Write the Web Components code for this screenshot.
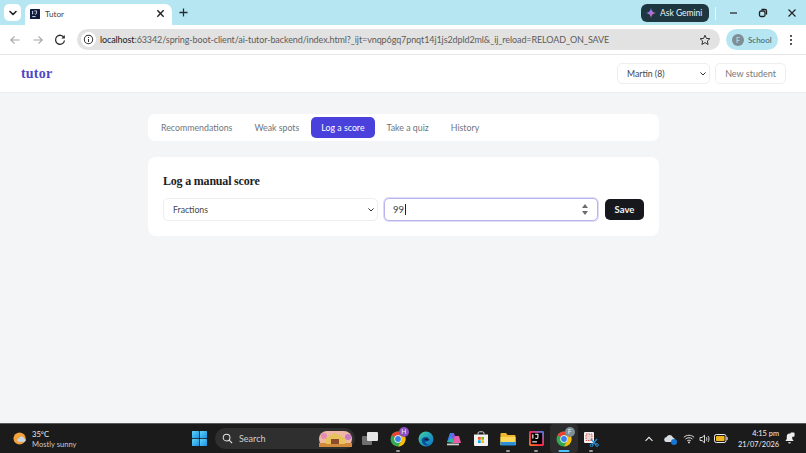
<!DOCTYPE html>
<html lang="en"><head><meta charset="utf-8"><title>Tutor</title>
<style>
html,body{margin:0;height:100%;overflow:hidden}
body{display:flex;flex-direction:column;width:806px;height:453px;font-family:"Noto Sans","Open Sans",sans-serif}
tutor-app{flex:1;min-height:0}
</style></head><body>
<chrome-tabstrip></chrome-tabstrip>
<chrome-toolbar url-host="localhost" url-rest=":63342/spring-boot-client/ai-tutor-backend/index.html?_ijt=vnqp6gq7pnqt14j1js2dpld2ml&amp;_ij_reload=RELOAD_ON_SAVE"></chrome-toolbar>
<tutor-app>
  <tutor-header slot="header"></tutor-header>
  <tutor-tabs>
    <tutor-tab>Recommendations</tutor-tab>
    <tutor-tab>Weak spots</tutor-tab>
    <tutor-tab active>Log a score</tutor-tab>
    <tutor-tab>Take a quiz</tutor-tab>
    <tutor-tab>History</tutor-tab>
  </tutor-tabs>
  <score-card></score-card>
</tutor-app>
<win-taskbar></win-taskbar>
<script>
const ICONS={
 chevron:'<svg viewBox="0 0 12 12" width="12" height="12"><path d="M3 4.500 6 7.500 9 4.500" fill="none" stroke="#1f1f1f" stroke-width="1.600" stroke-linecap="round" stroke-linejoin="round"/></svg>',
 caret:'<svg viewBox="0 0 6 4" width="6" height="4"><path d="M.7 .7 3 3 5.300 .7" fill="none" stroke="#333" stroke-width="1" stroke-linecap="round" stroke-linejoin="round"/></svg>',
 close:'<svg viewBox="0 0 10 10" width="9" height="9"><path d="M1.500 1.500 8.500 8.500M8.500 1.500 1.500 8.500" stroke="#1f1f1f" stroke-width="1.500"/></svg>',
 plus:'<svg viewBox="0 0 10 10" width="9" height="9"><path d="M5 .5V9.500M.5 5H9.500" stroke="#1f2f33" stroke-width="1.400"/></svg>',
 min:'<svg viewBox="0 0 10 10" width="10" height="10"><path d="M1 5H8" stroke="#1f1f1f" stroke-width="1.200"/></svg>',
 restore:'<svg viewBox="0 0 10 10" width="10" height="10"><rect x="1.500" y="3" width="5.500" height="5.500" rx="1.500" fill="none" stroke="#1f1f1f" stroke-width="1.300"/><path d="M3.500 1.500H7A1.500 1.500 0 0 1 8.500 3V6.500" fill="none" stroke="#1f1f1f" stroke-width="1.300"/></svg>',
 x:'<svg viewBox="0 0 10 10" width="10" height="10"><path d="M1.500 1.500 8.500 8.500M8.500 1.500 1.500 8.500" stroke="#1f1f1f" stroke-width="1.100"/></svg>',
 spark:'<svg viewBox="0 0 12 12" width="10" height="10"><defs><linearGradient id="g" x1="0" y1="0" x2="1" y2="1"><stop offset="0" stop-color="#4e9bf5"/><stop offset=".5" stop-color="#b06fe0"/><stop offset="1" stop-color="#f0605a"/></linearGradient></defs><path d="M6 0C6.500 3.500 8.500 5.500 12 6 8.500 6.500 6.500 8.500 6 12 5.500 8.500 3.500 6.500 0 6 3.500 5.500 5.500 3.500 6 0Z" fill="url(#g)"/></svg>',
 back:'<svg viewBox="0 0 12 12" width="12" height="12"><path d="M10.500 6H2M5.500 2.300 1.800 6 5.500 9.700" fill="none" stroke="#a5a5a5" stroke-width="1.100"/></svg>',
 fwd:'<svg viewBox="0 0 12 12" width="12" height="12"><path d="M1.500 6H10M6.500 2.300 10.200 6 6.500 9.700" fill="none" stroke="#a5a5a5" stroke-width="1.100"/></svg>',
 reload:'<svg viewBox="0 0 12 12" width="12" height="12"><path d="M10 3.600A4.500 4.500 0 1 0 10.500 6.500" fill="none" stroke="#2b2b2b" stroke-width="1.300"/><path d="M10.800 1V4.500H7.300Z" fill="#2b2b2b"/></svg>',
 info:'<svg viewBox="0 0 12 12" width="11" height="11"><circle cx="6" cy="6" r="4.600" fill="none" stroke="#333" stroke-width="1.100"/><path d="M6 5.400V8.700M6 3.300V4.400" stroke="#333" stroke-width="1.100"/></svg>',
 star:'<svg viewBox="0 0 12 12" width="12" height="12"><path d="M6 1.200 7.400 4.400 10.900 4.700 8.300 7 9.100 10.500 6 8.600 2.900 10.500 3.700 7 1.100 4.700 4.600 4.400Z" fill="none" stroke="#333" stroke-width="1"/></svg>',
 dots:'<svg viewBox="0 0 4 12" width="4" height="12"><circle cx="2" cy="2" r="1.050" fill="#2b2b2b"/><circle cx="2" cy="6" r="1.050" fill="#2b2b2b"/><circle cx="2" cy="10" r="1.050" fill="#2b2b2b"/></svg>',
 fav:'<svg viewBox="0 0 16 16" width="100%" height="100%"><rect width="16" height="16" rx="1" fill="#0d1a3d"/><rect x="3.500" y="3" width="1.500" height="5.500" fill="#e8eefc"/><path d="M7 3H10.500V7C10.500 8.500 8.500 8.500 7.500 7.500" fill="none" stroke="#e8eefc" stroke-width="1.300"/><rect x="3.500" y="11.500" width="5.500" height="1.400" fill="#e8eefc"/></svg>',
 ij:'<svg viewBox="0 0 16 16" width="100%" height="100%"><defs><linearGradient id="ij" x1="0" y1="1" x2="1" y2="0"><stop offset="0" stop-color="#f97a12"/><stop offset=".5" stop-color="#fe2857"/><stop offset="1" stop-color="#3b82f6"/></linearGradient></defs><rect width="16" height="16" rx="1.500" fill="url(#ij)"/><rect x="2" y="2" width="12" height="12" fill="#000"/><rect x="3.500" y="3.500" width="1.200" height="4.500" fill="#fff"/><path d="M6.500 3.500H9.500V7C9.500 8.200 7.500 8.200 6.800 7.300" fill="none" stroke="#fff" stroke-width="1.100"/><rect x="3.500" y="11" width="5" height="1.200" fill="#fff"/></svg>',
 win:'<svg viewBox="0 0 16 16" width="15" height="15"><defs><linearGradient id="w" x1="0" y1="0" x2="1" y2="1"><stop offset="0" stop-color="#5fd4f7"/><stop offset="1" stop-color="#1a8fe3"/></linearGradient></defs><rect x="0" y="0" width="7.600" height="7.600" rx=".6" fill="url(#w)"/><rect x="8.400" y="0" width="7.600" height="7.600" rx=".6" fill="url(#w)"/><rect x="0" y="8.400" width="7.600" height="7.600" rx=".6" fill="url(#w)"/><rect x="8.400" y="8.400" width="7.600" height="7.600" rx=".6" fill="url(#w)"/></svg>',
 weather:'<svg viewBox="0 0 16 16" width="15" height="15"><circle cx="7" cy="8" r="6.500" fill="#f2a23a"/><path d="M6 11.500a2 2 0 0 1 .4-3.900 3 3 0 0 1 5.600.6 1.700 1.700 0 0 1 .5 3.300Z" fill="#c7d6ea"/></svg>',
 search:'<svg viewBox="0 0 12 12" width="11" height="11"><circle cx="5" cy="5" r="3.700" fill="none" stroke="#e8e8e8" stroke-width="1.100"/><path d="M7.800 7.800 11 11" stroke="#e8e8e8" stroke-width="1.200"/></svg>',
 promo:'<svg viewBox="0 0 33 16" width="33" height="16"><rect width="33" height="16" rx="8" fill="#efb8a4"/><path d="M0 12H33V16H0Z" fill="#d08a3a"/><path d="M7 13V7L16 2 26 7V13Z" fill="#e8c25a"/><path d="M12 13V8H20V13Z" fill="#8e4a2c"/><circle cx="5" cy="5" r="3" fill="#e58ab0"/><circle cx="29" cy="6" r="3" fill="#c77bc4"/></svg>',
 task:'<svg viewBox="0 0 16 16" width="16" height="16"><rect x="0" y="5" width="10" height="9" rx="1" fill="#6f6f6f"/><rect x="5" y="1" width="11" height="9" rx="1" fill="#e6e6e6"/></svg>',
 chrome:'<svg viewBox="0 0 16 16" width="16" height="16"><circle cx="8" cy="8" r="7.500" fill="#34a853"/><path d="M8 .5A7.500 7.500 0 0 1 14.500 4.250H8A3.750 3.750 0 0 0 4.750 6.100L1.500 4.250A7.500 7.500 0 0 1 8 .5Z" fill="#ea4335"/><path d="M14.500 4.250A7.500 7.500 0 0 1 8 15.500L11.250 9.900A3.750 3.750 0 0 0 11.250 6.100 3.750 3.750 0 0 0 8 4.250Z" fill="#fbbc04"/><circle cx="8" cy="8" r="3.700" fill="#fff"/><circle cx="8" cy="8" r="2.900" fill="#3a7ff0"/></svg>',
 edge:'<svg viewBox="0 0 16 16" width="16" height="16"><defs><linearGradient id="e" x1="0" y1="0" x2="1" y2="1"><stop offset="0" stop-color="#3ed6a8"/><stop offset="1" stop-color="#0b6fc9"/></linearGradient></defs><circle cx="8" cy="8" r="7.500" fill="url(#e)"/><path d="M3.500 9C4 5.500 10 4.500 11.500 8.500 11.500 10 9.500 10.500 7.500 10.500 7 12.500 9.500 14 12 13.200 9 16 4 14.500 3.500 9Z" fill="#0a4f9c"/><ellipse cx="8.500" cy="8.500" rx="2" ry="1" fill="#1c1c1c"/></svg>',
 copilot:'<svg viewBox="0 0 18 16" width="18" height="16"><path d="M3 11 6 2H10L8 11Z" fill="#3b82f0"/><path d="M10 2 12 9H7L8 3Z" fill="#7d5ce0"/><path d="M8 12 11 5H15L17 12Z" fill="#e85ca8"/><path d="M3 11 8 6 10 12Z" fill="#2fb79b"/><rect x="3" y="12.500" width="12" height="1.800" fill="#cfcfcf"/></svg>',
 store:'<svg viewBox="0 0 16 16" width="16" height="16"><path d="M1 3.500H15V14A1 1 0 0 1 14 15H2A1 1 0 0 1 1 14Z" fill="#f2f2f2"/><path d="M5 3.500V2A1.500 1.500 0 0 1 6.500 .8H9.500A1.500 1.500 0 0 1 11 2V3.500" fill="none" stroke="#d0d0d0"/><rect x="5" y="6" width="2.700" height="2.700" fill="#f25022"/><rect x="8.300" y="6" width="2.700" height="2.700" fill="#7fba00"/><rect x="5" y="9.300" width="2.700" height="2.700" fill="#00a4ef"/><rect x="8.300" y="9.300" width="2.700" height="2.700" fill="#ffb900"/></svg>',
 folder:'<svg viewBox="0 0 16 16" width="16" height="16"><path d="M.5 3A1 1 0 0 1 1.500 2H6L7.500 4H14.500A1 1 0 0 1 15.500 5V14H.5Z" fill="#f2b92c"/><path d="M.5 6H15.500V14H.5Z" fill="#fcd75a"/><path d="M.5 11H15.500V14.500H.5Z" fill="#2b8fd8"/></svg>',
 snip:'<svg viewBox="0 0 16 16" width="16" height="16"><rect x="1" y="1" width="10" height="11" rx="1" fill="#f4f1f1"/><path d="M3 3H9V9.500H3Z" fill="#e9d3d3" stroke="#d9544f" stroke-width="1" stroke-dasharray="1.500 1"/><path d="M8 8 13 14M14 8 9 14" stroke="#2b8fd8" stroke-width="1.200"/><circle cx="14" cy="14" r="1.400" fill="none" stroke="#2b8fd8"/><circle cx="8.500" cy="14.300" r="1.400" fill="none" stroke="#2b8fd8"/></svg>',
 up:'<svg viewBox="0 0 10 10" width="10" height="10"><path d="M1.500 6.800 5 3.300 8.500 6.800" fill="none" stroke="#eee" stroke-width="1.100"/></svg>',
 onedrive:'<svg viewBox="0 0 14 14" width="14" height="14"><path d="M2 10a2.500 2.500 0 0 1 .5-4.900A3.500 3.500 0 0 1 9 5.500 2.500 2.500 0 0 1 10 10Z" fill="#d8dde4"/><circle cx="10" cy="10" r="3" fill="#1677d2"/></svg>',
 wifi:'<svg viewBox="0 0 12 10" width="12" height="10"><path d="M.8 3.300C3.800.6 8.200.6 11.200 3.300M2.500 5C4.500 3.300 7.500 3.300 9.500 5M4.200 6.800C5.200 6 6.800 6 7.800 6.800" fill="none" stroke="#eee" stroke-width=".9"/><circle cx="6" cy="8.400" r=".9" fill="#eee"/></svg>',
 sound:'<svg viewBox="0 0 12 10" width="12" height="10"><path d="M1 3.500H3L5.500 1.200V8.800L3 6.500H1Z" fill="none" stroke="#eee" stroke-width=".9"/><path d="M7.300 3.300C8 4.400 8 5.600 7.300 6.700M9 2C10.300 3.800 10.300 6.200 9 8" fill="none" stroke="#eee" stroke-width=".9"/></svg>',
 battery:'<svg viewBox="0 0 14 9" width="14" height="9"><rect x=".5" y=".5" width="11.500" height="8" rx="1.800" fill="none" stroke="#ececec"/><rect x="2" y="2" width="8.500" height="5" rx=".8" fill="#f3b61f"/><rect x="12.600" y="3" width="1" height="3" fill="#ececec"/></svg>',
 bell:'<svg viewBox="0 0 12 14" width="11" height="13"><path d="M6 1.500C3.800 1.500 3 3.200 3 5V7.500L1.500 9.800H10.500L9 7.500V5C9 3.200 8.200 1.500 6 1.500Z" fill="#eee"/><path d="M4.500 11H7.500A1.500 1.500 0 0 1 4.500 11Z" fill="#eee"/><rect x="7" y=".5" width="4.500" height="4.500" rx="1" fill="#eee"/></svg>'
};
function def(tag,html,extra){
  const tpl=document.createElement('template');tpl.innerHTML=html;
  customElements.define(tag,class extends HTMLElement{
    constructor(){super();this.attachShadow({mode:'open'}).appendChild(tpl.content.cloneNode(true));}
    connectedCallback(){extra&&extra.call(this,this.shadowRoot);}
  });
}
def('x-icon','<style>:host{display:inline-flex;align-items:center;justify-content:center;flex:none}</style><span style="display:contents"></span>',function(r){r.querySelector('span').innerHTML=ICONS[this.getAttribute('name')]||'';});

def('chrome-tabstrip',`<style>
:host{display:flex;align-items:flex-end;height:25px;background:#b5e6f2;padding-left:4px;box-sizing:border-box;color:#3a3a3a}
.sq{width:17px;height:17px;margin-bottom:4px;background:#fff;border-radius:5px;display:flex;align-items:center;justify-content:center}
.tab{margin-left:4px;width:147px;height:21px;background:#fff;border-radius:7px 7px 0 0;display:flex;align-items:center;padding:0 7px 2px 5px;box-sizing:border-box}
.fav{width:10px;height:10px;margin-right:5px;flex:none}
.t{flex:1;font:8.200px Lato,sans-serif;color:#444}
.plus{margin:0 0 4px 7px;width:10px;height:17px;display:flex;align-items:center}
.sp{flex:1}
.gem{height:18px;width:68px;box-sizing:border-box;margin-bottom:3px;border-radius:6px;background:#1d3640;color:#e9f4f7;display:flex;align-items:center;gap:4px;padding-left:5px;font:8.500px Lato,sans-serif;white-space:nowrap}
.sep{width:1px;height:13px;background:#e8fafe;margin:0 13px 5px 6px}
.ctl{display:flex;margin-bottom:3px;height:18px;align-items:center;gap:19px;margin-right:9px}
</style>
<div class="sq"><x-icon name="chevron"></x-icon></div>
<div class="tab"><x-icon class="fav" name="fav"></x-icon><span class="t">Tutor</span><x-icon name="close"></x-icon></div>
<div class="plus"><x-icon name="plus"></x-icon></div>
<div class="sp"></div>
<div class="gem"><x-icon name="spark"></x-icon><span>Ask Gemini</span></div>
<div class="sep"></div>
<div class="ctl"><x-icon name="min"></x-icon><x-icon name="restore"></x-icon><x-icon name="x"></x-icon></div>`);

def('chrome-toolbar',`<style>
:host{display:flex;align-items:center;height:30px;background:#fff;border-bottom:1px solid #e6e6e6;box-sizing:border-box;padding-left:9px}
.nav{display:flex;gap:10.500px;margin-right:11px}
.omni{width:643px;height:21px;border-radius:11px;background:#e2e2e2;display:flex;align-items:center;box-sizing:border-box;padding:0 9px 0 4px;font:9px Lato,sans-serif;letter-spacing:-.1px;white-space:nowrap;color:#5c5c5c}
.i{width:15px;height:15px;border-radius:50%;background:#fff;display:flex;align-items:center;justify-content:center;margin-right:4px;flex:none}
.u{flex:1;overflow:hidden}.u b{font-weight:400;color:#202020}
.pill{margin-left:6px;width:52px;height:21px;border-radius:11px;background:#b5e6f2;display:flex;align-items:center;padding-left:6px;box-sizing:border-box;gap:4px;font:8px Lato,sans-serif;color:#3d5c64}
.av{width:12px;height:12px;border-radius:50%;background:#7e8e95;color:#dfe8eb;font-size:7px;display:flex;align-items:center;justify-content:center}
.dots{margin-left:11px}
</style>
<div class="nav"><x-icon name="back"></x-icon><x-icon name="fwd"></x-icon><x-icon name="reload"></x-icon></div>
<div class="omni"><span class="i"><x-icon name="info"></x-icon></span><span class="u"><b id="h"></b><span id="r"></span></span><x-icon name="star"></x-icon></div>
<div class="pill"><span class="av">F</span><span>School</span></div>
<x-icon class="dots" name="dots"></x-icon>`,function(r){r.getElementById('h').textContent=this.getAttribute('url-host');r.getElementById('r').textContent=this.getAttribute('url-rest');});

def('tutor-app',`<style>
:host{display:block;background:#f4f5f7;font-family:Lato,"Noto Sans",sans-serif;overflow:hidden}
main{width:511px;margin:21px 0 0 148px;display:flex;flex-direction:column;gap:16px}
</style><slot name="header"></slot><main><slot></slot></main>`);

def('tutor-select',`<style>
:host{display:flex;align-items:center;box-sizing:border-box;background:#fff;border:1px solid #eceef1;border-radius:5px;padding:0 3px 0 9px;font:8.700px Lato,sans-serif;color:#44464c}
span{flex:1}
</style><span><slot></slot></span><x-icon name="caret"></x-icon>`);

def('tutor-header',`<style>
:host{display:flex;align-items:center;height:38px;box-sizing:border-box;background:#fff;border-bottom:1px solid #eceef1;padding:0 20px 0 21px}
.logo{font:700 14px "Liberation Serif",serif;color:#4f46c8;letter-spacing:.2px;flex:1}
tutor-select{width:93px;height:21px}
button{margin-left:5px;width:71px;height:21px;background:#fff;border:1px solid #eceef1;border-radius:5px;font:9px Lato,sans-serif;color:#777;padding:0}
</style>
<div class="logo">tutor</div>
<tutor-select>Martin (8)</tutor-select>
<button>New student</button>`);

def('tutor-tabs',`<style>
:host{display:flex;height:27px;box-sizing:border-box;background:#fff;border-radius:7px;padding:3px;gap:2px}
</style><slot></slot>`);

def('tutor-tab',`<style>
:host{display:flex;align-items:center;padding:0 10px;border-radius:5px;font:8.800px Lato,sans-serif;color:#70757e}
:host([active]){background:#4a41dc;color:#fff}
</style><slot></slot>`);

def('score-card',`<style>
:host{display:block;height:79px;box-sizing:border-box;background:#fff;border-radius:8px;padding:16px 15px 0}
h2{margin:0 0 9px;font:700 12px/16px "Liberation Serif",serif;letter-spacing:-.2px;color:#1d1d22}
.row{display:flex;align-items:center;gap:6px}
tutor-select{flex:none;width:215px;height:23px}
.num{width:214px;height:23px;box-sizing:border-box;border:1px solid #b9b4ec;box-shadow:0 0 0 1px #dedcf7;border-radius:5px;display:flex;align-items:center;padding:0 8px;font:9.500px Lato,sans-serif;color:#3c3c42;background:#fff}
.caret{width:1px;height:11px;background:#222;margin-left:.5px}
.sp{flex:1}
.spin{width:8px;height:13px}
button{margin-left:1px;width:39px;height:21px;border:0;border-radius:5px;background:#16181d;color:#f4f4f4;font:700 9.500px Lato,sans-serif;padding:0}
</style>
<h2>Log a manual score</h2>
<div class="row">
<tutor-select>Fractions</tutor-select>
<div class="num"><span>99</span><span class="caret"></span><span class="sp"></span><svg class="spin" viewBox="0 0 8 13"><path d="M4 1 7 5H1ZM4 12 1 8H7Z" fill="#6b6b70"/></svg></div>
<button>Save</button>
</div>`);

def('task-app',`<style>
:host{display:flex;position:relative;width:27.625px;height:29px;align-items:center;justify-content:center;flex:none}
:host([active]){background:#2c2c2c;border-radius:4px}
.dot{position:absolute;bottom:1px;left:50%;transform:translateX(-50%);width:4px;height:2px;border-radius:1px;background:#9a9a9a;display:none}
:host([run]) .dot{display:block}
:host([active]) .dot{display:block;width:11px;background:#4cc2ff}
.b{position:absolute;top:3px;right:3px;width:10px;height:10px;border-radius:50%;font:7px/10px "Noto Sans",sans-serif;text-align:center;color:#eee;display:none}
:host([badge]) .b{display:block}
</style><slot></slot><span class="b"></span><span class="dot"></span>`,function(r){const b=this.getAttribute('badge');if(b){const e=r.querySelector('.b');e.textContent=b;e.style.background=this.getAttribute('badge-bg');}});

def('win-taskbar',`<style>
:host{display:flex;align-items:center;height:30px;background:#1b1b1b;border-top:1px solid #5a5a5a;box-sizing:border-box;color:#eee;font-family:Lato,sans-serif;flex:none;overflow:hidden}
.weather{display:flex;align-items:center;gap:4px;margin-left:13px;width:173px;box-sizing:border-box;font-size:7.600px;line-height:10px}
.weather small{display:block;font-size:7.600px;color:#c8c8c8}
.start{width:27px;display:flex;justify-content:center;margin-right:2px;flex:none}
.search{width:140px;height:21px;border-radius:11px;background:#2f2f2f;display:flex;align-items:center;padding:0 3px 0 7px;box-sizing:border-box;gap:6px;font-size:9px;color:#cfcfcf;flex:none}
.search span{flex:1}
.apps{display:flex;margin-left:1.500px}
.tray{margin-left:auto;display:flex;align-items:center;padding-right:11px}
.clock{text-align:right;font-size:7.400px;line-height:11px;margin:0 5px 0 10px;color:#eee;white-space:nowrap}
</style>
<div class="weather"><x-icon name="weather"></x-icon><div>35°C<small>Mostly sunny</small></div></div>
<div class="start"><x-icon name="win"></x-icon></div>
<div class="search"><x-icon name="search"></x-icon><span>Search</span><x-icon name="promo"></x-icon></div>
<div class="apps">
<task-app><x-icon name="task"></x-icon></task-app>
<task-app run badge="H" badge-bg="#8a4fc0"><x-icon name="chrome"></x-icon></task-app>
<task-app><x-icon name="edge"></x-icon></task-app>
<task-app><x-icon name="copilot"></x-icon></task-app>
<task-app><x-icon name="store"></x-icon></task-app>
<task-app run><x-icon name="folder"></x-icon></task-app>
<task-app run><x-icon name="ij" style="width:15px;height:15px"></x-icon></task-app>
<task-app active badge="F" badge-bg="#7e8e95"><x-icon name="chrome"></x-icon></task-app>
<task-app run><x-icon name="snip"></x-icon></task-app>
</div>
<div class="tray">
<x-icon name="up"></x-icon>
<x-icon name="onedrive" style="margin-left:10px"></x-icon>
<x-icon name="wifi" style="margin-left:5px"></x-icon>
<x-icon name="sound" style="margin-left:4px"></x-icon>
<x-icon name="battery" style="margin-left:3px"></x-icon>
<div class="clock">4:15 pm<br>21/07/2026</div>
<x-icon name="bell"></x-icon>
</div>`);
</script>
</body></html>
